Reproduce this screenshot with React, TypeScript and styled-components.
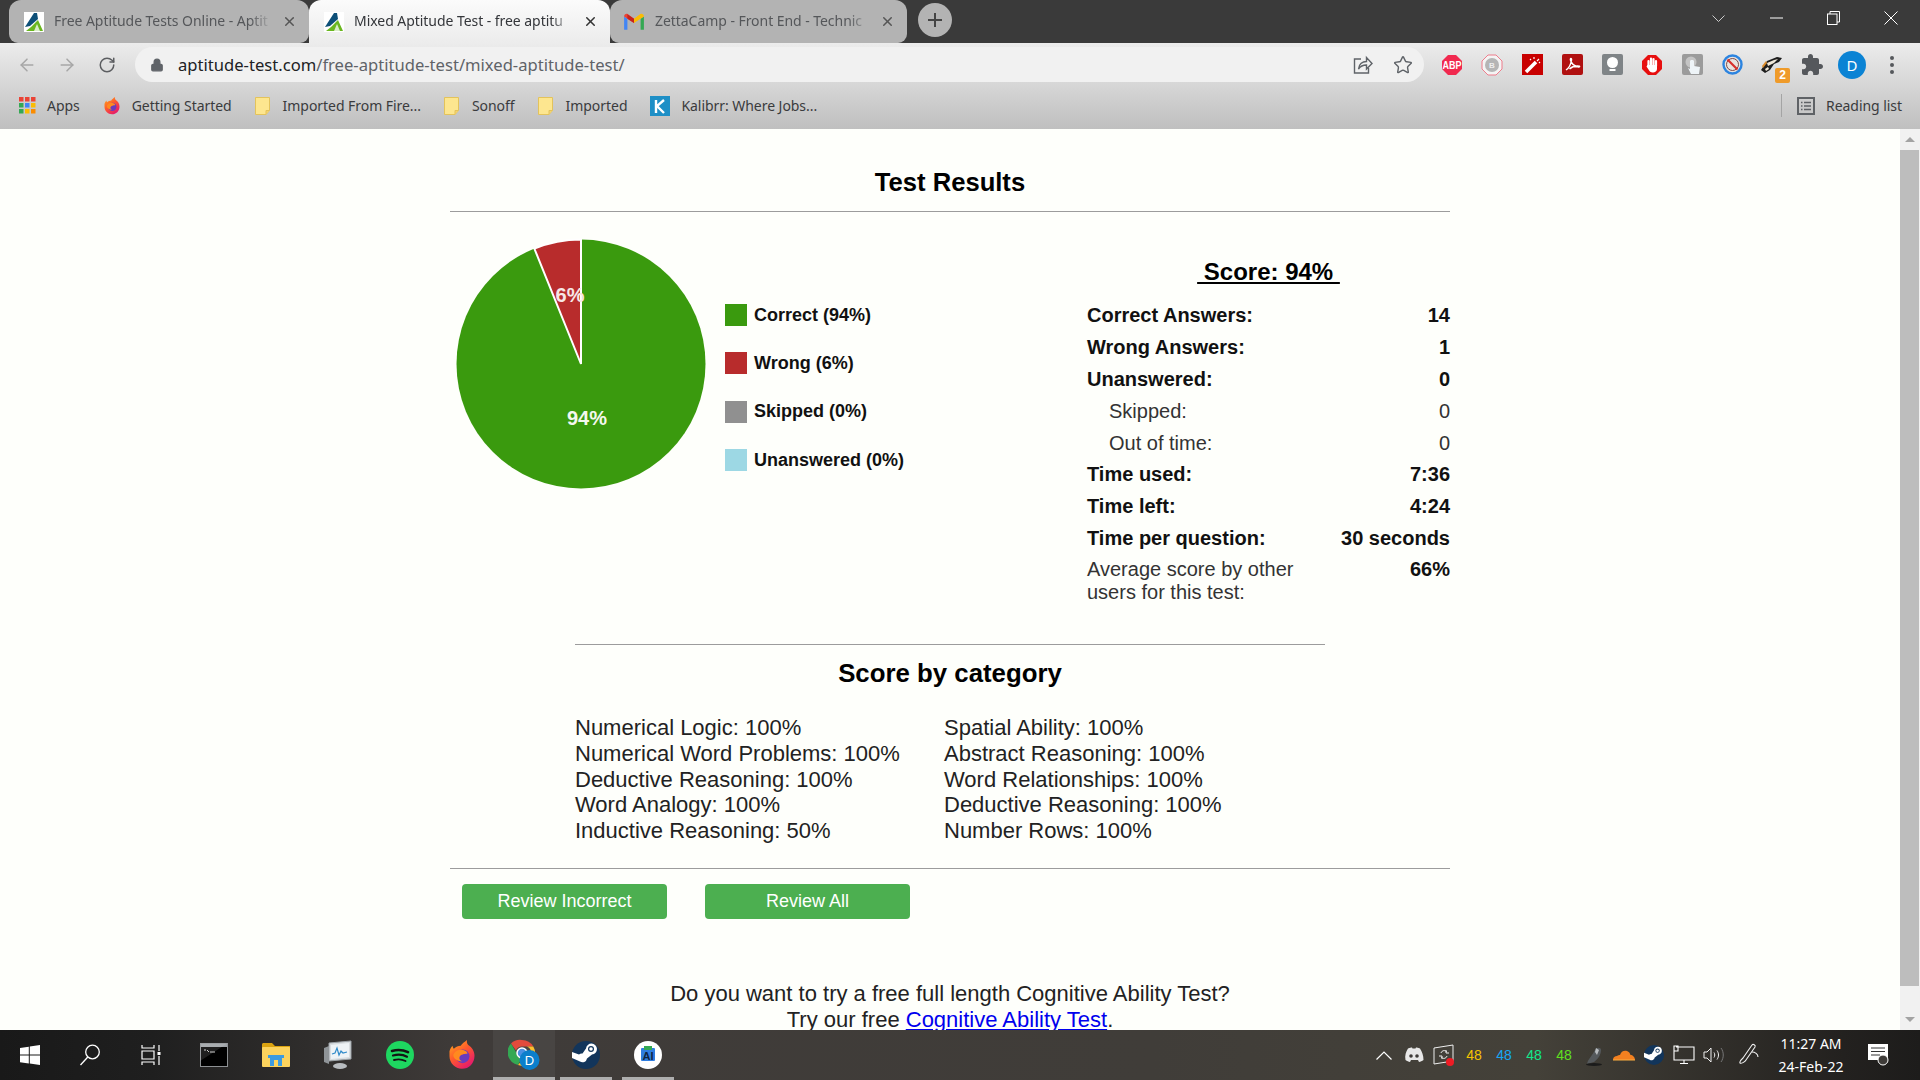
import { ReactNode } from 'react'
import styled, { createGlobalStyle } from 'styled-components'
import { ArrowLeft, ArrowRight, Lock, RotateCw, Star, X } from 'lucide-react'

const GlobalStyle = createGlobalStyle`
  html, body {
    margin: 0;
    height: 100%;
    overflow: hidden;
    background: #fefffb;
  }
  * {
    box-sizing: border-box;
  }
`

const UI_FONT = `"Noto Sans", "Open Sans", sans-serif`
const PAGE_FONT = `"Liberation Sans", Arial, sans-serif`

const Shell = styled.div`
  width: 1920px;
  height: 1080px;
  display: flex;
  flex-direction: column;
  font-family: ${UI_FONT};
`

/* ---------- tab strip ---------- */

const TabStrip = styled.div`
  height: 43px;
  flex: none;
  display: flex;
  align-items: stretch;
  padding-left: 9px;
  background: #3a3a3a;
`

const Tab = styled.div<{ $active?: boolean; $width: number; $pad: number }>`
  width: ${({ $width }) => $width}px;
  display: flex;
  align-items: center;
  gap: 10px;
  padding: 0 12px 0 ${({ $pad }) => $pad}px;
  border-radius: ${({ $active }) => ($active ? '12px 12px 0 0' : '12px 12px 9px 9px')};
  background: ${({ $active }) => ($active ? 'linear-gradient(#fbfbfb, #ececec)' : '#b3b3b3')};
  color: ${({ $active }) => ($active ? '#34363a' : '#55575a')};
`

const TabTitle = styled.span`
  flex: 1;
  min-width: 0;
  padding-bottom: 2px;
  white-space: nowrap;
  font-size: 14px;
  letter-spacing: -0.05px;
  -webkit-mask-image: linear-gradient(90deg, #000 90%, transparent);
  mask-image: linear-gradient(90deg, #000 90%, transparent);
`

const NewTab = styled.div`
  width: 34px;
  height: 34px;
  margin: 3px 0 0 11px;
  border-radius: 50%;
  display: flex;
  align-items: center;
  justify-content: center;
  background: #b3b3b3;
  color: #444;
`

const WindowControls = styled.div`
  margin-left: auto;
  display: flex;
  align-items: flex-start;
  color: #fff;
`

const WindowButton = styled.div<{ $width: number }>`
  width: ${({ $width }) => $width}px;
  height: 36px;
  display: flex;
  align-items: center;
  justify-content: center;
`

/* ---------- toolbar + bookmarks ---------- */

const ChromeBars = styled.div`
  flex: none;
  background: linear-gradient(#ececec, #bfbfbf);
`

const Toolbar = styled.div`
  height: 43px;
  display: flex;
  align-items: center;
  padding-left: 7px;
`

const NavButton = styled.div<{ $dim?: boolean }>`
  width: 40px;
  display: flex;
  justify-content: center;
  color: ${({ $dim }) => ($dim ? '#a6a6a6' : '#5c5e61')};
`

const AddressBar = styled.div`
  width: 1289px;
  height: 35px;
  margin-left: 8px;
  padding: 0 11px 0 15px;
  display: flex;
  align-items: center;
  border-radius: 18px;
  background: #f1f1f1;
  color: #5f6368;
`

const Url = styled.span`
  margin-left: 14px;
  font-size: 16.6px;
  color: #5f6368;
  white-space: nowrap;
`

const Domain = styled.span`
  color: #202124;
`

const AddressActions = styled.div`
  margin-left: auto;
  display: flex;
  align-items: center;
  gap: 20px;
`

const Extensions = styled.div`
  display: flex;
  align-items: center;
  margin-left: 8px;
`

const ExtensionSlot = styled.div`
  position: relative;
  width: 40px;
  height: 30px;
  display: flex;
  align-items: center;
  justify-content: center;
`

const Badge = styled.span`
  position: absolute;
  right: 2px;
  bottom: -3px;
  width: 15px;
  height: 15px;
  border-radius: 2px;
  background: #ef9b2a;
  color: #fff;
  font: bold 12px/15px ${PAGE_FONT};
  text-align: center;
`

const Avatar = styled.div`
  width: 28px;
  height: 28px;
  border-radius: 50%;
  background: #0b83d4;
  color: #fff;
  font-size: 15px;
  line-height: 28px;
  text-align: center;
`

const BookmarkBar = styled.div`
  height: 43px;
  display: flex;
  align-items: center;
  padding: 0 18px 4px 19px;
  gap: 23px;
  color: #3a3b3d;
  font-size: 14px;
  letter-spacing: -0.05px;
`

const Bookmark = styled.div`
  display: flex;
  align-items: center;
  gap: 11px;
  white-space: nowrap;
`

const FolderGlyph = styled.svg`
  margin-right: 2px;
`

const ReadingList = styled.div`
  margin-left: auto;
  height: 23px;
  padding-left: 15px;
  display: flex;
  align-items: center;
  gap: 11px;
  border-left: 1px solid #a4a4a4;
  white-space: nowrap;
`

/* ---------- page ---------- */

const Viewport = styled.div`
  flex: 1;
  min-height: 0;
  display: flex;
`

const Page = styled.main`
  flex: 1;
  min-width: 0;
  overflow: hidden;
  background: #fefffb;
  font-family: ${PAGE_FONT};
  color: #111;
`

const Container = styled.div`
  width: 1000px;
  margin: 0 auto;
  padding-top: 36px;
`

const Title = styled.h1`
  margin: 0;
  font-size: 25.6px;
  line-height: 34px;
  text-align: center;
  color: #000;
`

const Rule = styled.hr<{ $width?: number }>`
  width: ${({ $width }) => $width ?? 1000}px;
  height: 1px;
  margin: 0 auto;
  border: 0;
  background: #9c9c9c;
`

const TopRule = styled(Rule)`
  margin-top: 12px;
`

const Results = styled.section`
  display: flex;
  align-items: flex-start;
  height: 432px;
`

const PieChart = styled.svg`
  flex: none;
  margin-top: 22px;
`

const Legend = styled.ul`
  list-style: none;
  margin: 92px 0 0 13px;
  padding: 0;
  display: flex;
  flex-direction: column;
  gap: 26.4px;
`

const LegendItem = styled.li`
  display: flex;
  align-items: center;
  gap: 7px;
  height: 22px;
  font-size: 18px;
  font-weight: bold;
  color: #111;
  white-space: nowrap;
`

const Swatch = styled.span<{ $color: string }>`
  width: 22px;
  height: 22px;
  background: ${({ $color }) => $color};
`

const Stats = styled.div`
  width: 363px;
  margin-left: auto;
  padding-top: 46px;
`

const ScoreHeading = styled.div`
  margin-bottom: 14px;
  font-size: 24px;
  font-weight: bold;
  line-height: 28px;
  text-align: center;
  text-decoration: underline;
  white-space: pre;
  color: #000;
`

const StatRow = styled.div<{ $bold?: boolean; $indent?: boolean }>`
  height: 31.8px;
  display: flex;
  align-items: center;
  justify-content: space-between;
  padding-left: ${({ $indent }) => ($indent ? 22 : 0)}px;
  font-size: 20px;
  font-weight: ${({ $bold }) => ($bold ? 'bold' : 'normal')};
  color: ${({ $bold }) => ($bold ? '#111' : '#333')};
`

const AverageRow = styled.div`
  display: flex;
  align-items: flex-start;
  justify-content: space-between;
  padding-top: 4px;
  font-size: 20px;
  line-height: 23px;
  color: #333;
`

const AverageLabel = styled.span`
  width: 230px;
`

const AverageValue = styled.b`
  color: #111;
`

const CategoryHeading = styled.h2`
  margin: 13px 0 27px;
  font-size: 25.8px;
  line-height: 30px;
  text-align: center;
  color: #000;
`

const Categories = styled.div`
  display: grid;
  grid-template-columns: 369px 1fr;
  grid-auto-flow: column;
  grid-template-rows: repeat(5, 25.8px);
  margin-left: 125px;
  margin-bottom: 24px;
  font-size: 22px;
  line-height: 25.8px;
  color: #222;
`

const Actions = styled.div`
  display: flex;
  gap: 38px;
  margin: 15px 0 62px 12px;
`

const ReviewButton = styled.button`
  width: 205px;
  height: 35px;
  border: 0;
  border-radius: 4px;
  background: #4caf50;
  color: #fff;
  font-family: ${PAGE_FONT};
  font-size: 18px;
`

const Promo = styled.p`
  margin: 0;
  font-size: 22px;
  line-height: 26px;
  text-align: center;
  color: #222;
`

const Scrollbar = styled.div`
  width: 20px;
  flex: none;
  display: flex;
  flex-direction: column;
  align-items: center;
  background: #f1f1f1;
  padding-right: 1px;
`

const ScrollArrow = styled.div<{ $down?: boolean }>`
  height: 21px;
  width: 100%;
  display: flex;
  align-items: center;
  justify-content: center;
  &::before {
    content: '';
    border-left: 5px solid transparent;
    border-right: 5px solid transparent;
    ${({ $down }) =>
      $down ? 'border-top: 5px solid #a3a3a3;' : 'border-bottom: 5px solid #a3a3a3;'}
  }
`

const ScrollThumb = styled.div`
  width: 100%;
  flex: 1;
  margin-bottom: 23px;
  background: #bdbdbd;
`

/* ---------- taskbar ---------- */

const Taskbar = styled.footer`
  height: 50px;
  flex: none;
  display: flex;
  align-items: stretch;
  background: linear-gradient(90deg, #191919 0, #1f1f1f 8%, #3f3b39 24%, #403d39 60%, #444139 80%, #23211f 96%, #1d1c1b 100%);
  color: #fff;
`

const TaskButton = styled.div<{ $width?: number; $open?: boolean; $focus?: boolean }>`
  position: relative;
  width: ${({ $width }) => $width ?? 62}px;
  display: flex;
  align-items: center;
  justify-content: center;
  background: ${({ $focus }) => ($focus ? 'rgba(255,255,255,0.05)' : 'transparent')};
  &::after {
    content: '';
    display: ${({ $open }) => ($open ? 'block' : 'none')};
    position: absolute;
    left: ${({ $focus }) => ($focus ? 0 : 5)}px;
    right: ${({ $focus }) => ($focus ? 0 : 5)}px;
    bottom: 0;
    height: 3px;
    background: #aeaeae;
  }
`

const Tray = styled.div`
  margin-left: auto;
  padding-right: 15px;
  display: flex;
  align-items: stretch;
`

const TrayItem = styled.div<{ $width?: number }>`
  width: ${({ $width }) => $width ?? 30}px;
  display: flex;
  align-items: center;
  justify-content: center;
`

const TempReading = styled.span<{ $color: string }>`
  font: 14px ${PAGE_FONT};
  color: ${({ $color }) => $color};
`

const Clock = styled.div`
  width: 84px;
  display: flex;
  flex-direction: column;
  align-items: center;
  justify-content: center;
  font-size: 14px;
  line-height: 23px;
  color: #fff;
  white-space: nowrap;
`

/* ---------- drawings ---------- */

const AptitudeIcon = () => (
  <svg width="20" height="20" viewBox="0 0 20 20">
    <rect width="20" height="20" fill="#fff" />
    <path d="M1 15 10 1h3l1 6-8 7z" fill="#0d4f78" />
    <path d="M2 19l5-4 5-5 2-2 5 11z" fill="#6ab71f" />
    <path d="M10 19l3-7 3 7z" fill="#fff" opacity=".75" />
  </svg>
)

const GmailIcon = () => (
  <svg width="22" height="18" viewBox="0 0 20 16">
    <path d="M1 15V3l3 2v10z" fill="#4285f4" />
    <path d="M16 15V5l3-2v12z" fill="#34a853" />
    <path d="M1 3c0-2 2-3 3.500-2L10 5v4L1 3z" fill="#ea4335" />
    <path d="M19 3c0-2-2-3-3.500-2L10 5v4l9-6z" fill="#fbbc04" />
    <path d="M4 5l6 4V5L4 1z" fill="#c5221f" />
  </svg>
)

const FirefoxIcon = ({ size = 18 }: { size?: number }) => (
  <svg width={size} height={size} viewBox="0 0 24 24">
    <defs>
      <linearGradient id="fxOuter" x1="0" y1="0" x2=".7" y2="1">
        <stop offset="0" stopColor="#ffb21a" />
        <stop offset=".5" stopColor="#ff5a2c" />
        <stop offset="1" stopColor="#e3186f" />
      </linearGradient>
    </defs>
    <path d="M2 9c.5-2 1.500-3.500 2.500-4.500 0 1 .5 2 1 2.500C7 5.500 9 4.500 11 4.500c1-1.500 3-3 5-4.500-.3 1.500 0 3 1 4 3 2 5 5 5 8.500C22 18.500 17.500 23 12 23S2 18.500 2 13c0-1.500 0-2.800 0-4z" fill="url(#fxOuter)" />
    <circle cx="12.500" cy="13" r="5.500" fill="#6a3bbd" />
    <path d="M5 12c1-3 4-5 8-4 3 .7 4 3 3 3-2 0-5 .5-6 2.500-.5 1.500.5 3 2.500 3.500C9 17 5 15.500 5 12z" fill="#ff8a1f" />
  </svg>
)

const FolderBookmark = () => (
  <FolderGlyph width="15" height="18" viewBox="0 0 15 18">
    <path d="M.5.5h14v13l-3.500 4H.5z" fill="#fde68f" stroke="#e3c35c" />
    <path d="M14.500 13.500H11v4" fill="#f4d36f" stroke="#e3c35c" />
  </FolderGlyph>
)

const AppsGrid = () => {
  const colors = ['#ea4335', '#ea4335', '#ea4335', '#34a853', '#4285f4', '#fbbc04', '#34a853', '#fbbc04', '#fb8c00']
  return (
    <svg width="17" height="17" viewBox="0 0 17 17">
      {colors.map((color, i) => (
        <rect key={i} x={(i % 3) * 6} y={Math.floor(i / 3) * 6} width="4.500" height="4.500" fill={color} />
      ))}
    </svg>
  )
}

const KalibrrIcon = () => (
  <svg width="20" height="20" viewBox="0 0 20 20">
    <rect width="20" height="20" fill="#1e8fc6" />
    <path d="M6 4v13M14 4 7 10l7 7" fill="none" stroke="#fff" strokeWidth="2.400" />
  </svg>
)

const ShareIcon = () => (
  <svg width="20" height="20" viewBox="0 0 20 20" fill="none" stroke="#5f6368" strokeWidth="1.400">
    <path d="M8 4H1.500v14h14v-5" />
    <path d="M5.500 14c.5-5 4-7.500 8-7.500V2.500l5.500 6-5.500 5.500v-4c-3.500 0-6 1-8 4z" />
  </svg>
)

const Octagon = ({ fill, stroke }: { fill: string; stroke?: string }) => (
  <path d="M7 1h8l6 6v8l-6 6H7l-6-6V7z" fill={fill} stroke={stroke} />
)

const AbpIcon = () => (
  <svg width="22" height="22" viewBox="0 0 22 22">
    <Octagon fill="#f1294f" />
    <text x="11" y="15" textAnchor="middle" fontFamily={PAGE_FONT} fontWeight="bold" fontSize="10.500" textLength="19" lengthAdjust="spacingAndGlyphs" fill="#fff">ABP</text>
  </svg>
)

const BadgeBlockerIcon = () => (
  <svg width="22" height="22" viewBox="0 0 22 22">
    <Octagon fill="#f4f4f4" stroke="#ee7d8c" />
    <circle cx="11" cy="11" r="7" fill="#b5b5b5" />
    <text x="11" y="14" textAnchor="middle" fontFamily={PAGE_FONT} fontWeight="bold" fontSize="8" fill="#eee">B</text>
  </svg>
)

const WandIcon = () => (
  <svg width="21" height="21" viewBox="0 0 21 21">
    <rect width="21" height="21" fill="#c80000" />
    <path d="M4 18 14 8" stroke="#fff" strokeWidth="3.500" />
    <path d="M15 7l2-2M12 3v2M18 9l-1-1M8 5l1 1" stroke="#fff" strokeWidth="1.200" />
  </svg>
)

const PdfIcon = () => (
  <svg width="21" height="21" viewBox="0 0 21 21">
    <rect width="21" height="21" rx="2" fill="#b01010" />
    <path d="M4 16c3-2 5-6 5.500-10 .2-2-1.500-2-1 0 .7 3 3 6 8 7 1.500.2 1.500-1 0-1-3-.2-7 1-9 3" fill="none" stroke="#fff" strokeWidth="1.500" />
  </svg>
)

const BulbIcon = () => (
  <svg width="21" height="21" viewBox="0 0 21 21">
    <rect width="21" height="21" rx="2" fill="#7f8487" />
    <circle cx="10.500" cy="8.500" r="5.500" fill="#fff" />
    <rect x="7.500" y="15" width="6" height="2" fill="#fff" />
  </svg>
)

const StopHandIcon = () => (
  <svg width="22" height="22" viewBox="0 0 22 22">
    <Octagon fill="#e70f0f" />
    <path d="M7.500 12V7M10 11V4.500M12.500 11V5M15 12V7" stroke="#fff" strokeWidth="2.200" strokeLinecap="round" />
    <path d="M6.500 11h9.500v4c0 2-2 3.500-4 3.500-2.500 0-3.500-1-4.500-3l-2-3z" fill="#fff" />
  </svg>
)

const TouchIcon = () => (
  <svg width="21" height="21" viewBox="0 0 21 21">
    <rect width="21" height="21" rx="2" fill="#9b9b9b" />
    <circle cx="9" cy="8" r="5.500" fill="#c4c4c4" />
    <path d="M8 7v8l-2-1 3 6h8l1-7-6-1V7c0-1.500-4-1.500-4 0z" fill="#eef4f8" />
  </svg>
)

const NoEntryIcon = () => (
  <svg width="21" height="21" viewBox="0 0 21 21">
    <circle cx="10.500" cy="10.500" r="9" fill="#e9e4e0" stroke="#2c84e0" strokeWidth="2.400" />
    <circle cx="10.500" cy="10.500" r="6" fill="none" stroke="#7a4a4a" strokeWidth="1" />
    <path d="M5.500 5.500l10 10" stroke="#d8302c" strokeWidth="2.200" />
  </svg>
)

const BadgerIcon = () => (
  <svg width="24" height="20" viewBox="0 0 24 20">
    <path d="M1 15 7 6l10-4 5 1-3 4-5 2-4 6-5 3z" fill="#1d1d1d" />
    <path d="M7 8l7-3 4-1-4 4-6 3zM5 14l3-2 1 2-3 2z" fill="#efe7d8" />
    <path d="M2 11l4-5 1 2-4 5z" fill="#d98a2a" />
  </svg>
)

const PuzzleIcon = () => (
  <svg width="24" height="24" viewBox="0 0 24 24" fill="#55585c">
    <path d="M20.500 11H19V7c0-1.100-.9-2-2-2h-4V3.500C13 2.120 11.880 1 10.500 1S8 2.120 8 3.500V5H4c-1.100 0-1.990.9-1.990 2v3.800H3.500c1.490 0 2.700 1.210 2.700 2.700s-1.210 2.700-2.700 2.700H2V20c0 1.100.9 2 2 2h3.800v-1.500c0-1.490 1.210-2.700 2.700-2.700 1.490 0 2.700 1.210 2.700 2.700V22H17c1.100 0 2-.9 2-2v-4h1.500c1.380 0 2.500-1.120 2.500-2.500S21.880 11 20.500 11z" />
  </svg>
)

const MoreDots = () => (
  <svg width="6" height="20" viewBox="0 0 6 20" fill="#55585c">
    <circle cx="3" cy="3" r="2" />
    <circle cx="3" cy="10" r="2" />
    <circle cx="3" cy="17" r="2" />
  </svg>
)

const ReadingIcon = () => (
  <svg width="18" height="18" viewBox="0 0 18 18" fill="none" stroke="#5f6266">
    <rect x="1" y="1" width="16" height="16" strokeWidth="2" />
    <path d="M4 5.500h1.500M7 5.500h7M4 9h1.500M7 9h7M4 12.500h1.500M7 12.500h7" strokeWidth="1.300" />
  </svg>
)

const WindowsLogo = () => (
  <svg width="20" height="20" viewBox="0 0 20 20" fill="#fff">
    <path d="M0 3l8.800-1.300v7.900H0zM9.800 1.500 20 0v9.600H9.800zM0 10.600h8.800v7.800L0 17.200zM9.800 10.600H20V20L9.800 18.600z" />
  </svg>
)

const SearchGlyph = () => (
  <svg width="22" height="22" viewBox="0 0 22 22" fill="none" stroke="#fff" strokeWidth="1.300">
    <circle cx="13.500" cy="8" r="6.800" />
    <path d="M8.800 13 1.500 21" />
  </svg>
)

const TaskViewGlyph = () => (
  <svg width="20" height="20" viewBox="0 0 20 20" fill="none" stroke="#fff" strokeWidth="1.200">
    <path d="M1 0v3h12V0M1 20v-3h12v3M1 6h12v8H1zM18 0v6M18 11v9" />
    <rect x="16.500" y="7" width="3" height="3" fill="#fff" stroke="none" />
  </svg>
)

const ConsoleIcon = () => (
  <svg width="28" height="24" viewBox="0 0 28 24">
    <rect x=".5" y=".5" width="27" height="23" fill="#000" stroke="#8d9093" />
    <rect x="1" y="1" width="26" height="3" fill="#9ea2a6" />
    <path d="M0 0h28L0 18z" fill="#fff" opacity=".12" />
    <path d="M4 7h2M7 7l2 2M10 9h5" stroke="#ccc" strokeWidth="1" />
  </svg>
)

const ExplorerIcon = () => (
  <svg width="28" height="24" viewBox="0 0 28 24">
    <path d="M0 1.500C0 .7.700 0 1.500 0H10l3 3h15v4H0z" fill="#dba310" />
    <rect y="4" width="28" height="20" rx="1" fill="#fcd35d" />
    <path d="M8 23V13h12v10h-4v-6h-4v6z" fill="#3c9be0" />
    <rect x="6" y="12" width="16" height="3" fill="#3c9be0" />
  </svg>
)

const MonitorIcon = () => (
  <svg width="28" height="30" viewBox="0 0 28 30">
    <path d="M5 3 27 1v18L5 21z" fill="#d8dde0" stroke="#9aa0a5" />
    <path d="M7 5 25 3v14L7 19z" fill="#eef3f6" />
    <path d="M8 14l3-1 2-5 2 7 2-4 2 2 4-1" fill="none" stroke="#2f8ac9" strokeWidth="1.200" />
    <path d="M0 8l5-2v18l-5-2z" fill="#8f9498" />
    <ellipse cx="16" cy="26" rx="7" ry="3" fill="#b8bcc0" />
  </svg>
)

const SpotifyIcon = () => (
  <svg width="28" height="28" viewBox="0 0 28 28" fill="none" stroke="#141414" strokeLinecap="round">
    <circle cx="14" cy="14" r="14" fill="#1ed760" stroke="none" />
    <path d="M6 10c5-1.500 11-1.200 16 1.200" strokeWidth="2.600" />
    <path d="M7 14.500c4.500-1.200 10-1 14 1.200" strokeWidth="2.200" />
    <path d="M8 19c4-1 8-.8 11.500 1" strokeWidth="1.900" />
  </svg>
)

const ChromeProfileIcon = () => (
  <svg width="32" height="32" viewBox="0 0 32 32">
    <path d="M14 1a13 13 0 0 1 11.300 6.500H14a6.500 6.500 0 0 0-6 4L3 4.500A13 13 0 0 1 14 1z" fill="#e24b3c" />
    <path d="M3 4.500l5.500 9.500a6 6 0 0 0 5 5.500l-3.500 6.500A13 13 0 0 1 3 4.500z" fill="#34a853" />
    <path d="M25.300 7.500A13 13 0 0 1 14 27l-4 -1 6-7a6 6 0 0 0 3-11.500z" fill="#fbc02d" />
    <circle cx="14" cy="14" r="5" fill="#4a90e2" stroke="#fff" strokeWidth="1.500" />
    <circle cx="21.500" cy="21" r="10" fill="#0b7fcb" />
    <text x="21.500" y="26" textAnchor="middle" fontFamily={PAGE_FONT} fontSize="13" fill="#fff">D</text>
  </svg>
)

const SteamIcon = ({ size = 28 }: { size?: number }) => (
  <svg width={size} height={size} viewBox="0 0 28 28">
    <circle cx="14" cy="14" r="14" fill="#12355b" />
    <path d="M0 17l8 3.500a4.500 4.500 0 0 0 7-3l5-4a5.500 5.500 0 1 0-6-6l-3.500 5a4.500 4.500 0 0 0-3.500 1L0 11z" fill="#fff" />
    <circle cx="19" cy="8" r="3" fill="#12355b" />
    <circle cx="19" cy="8" r="1.800" fill="#fff" />
  </svg>
)

const StudioIcon = () => (
  <svg width="28" height="28" viewBox="0 0 28 28">
    <circle cx="14" cy="14" r="14" fill="#fff" />
    <rect x="7" y="7" width="14" height="13" rx="1" fill="#2f7de0" />
    <rect x="10" y="5" width="8" height="4" fill="#34a853" />
    <text x="14" y="19" textAnchor="middle" fontFamily={PAGE_FONT} fontWeight="bold" fontSize="11" fill="#10243f">AI</text>
  </svg>
)

const DiscordIcon = () => (
  <svg width="20" height="16" viewBox="0 0 20 16" fill="#e8e8e8">
    <path d="M4 1.500C6 .7 7 .5 8 .5l.5 1h3l.5-1c1 0 2 .2 4 1 2 3 3.500 7 3.500 11.500-1.500 1.200-3 1.800-4.500 2l-1-2H7l-1 2c-1.500-.2-3-.8-4.500-2C.5 8.500 2 4.500 4 1.500z" />
    <circle cx="7" cy="9" r="1.800" fill="#3f3c39" />
    <circle cx="13" cy="9" r="1.800" fill="#3f3c39" />
  </svg>
)

const SyncIcon = () => (
  <svg width="22" height="22" viewBox="0 0 22 22" fill="none" stroke="#eee" strokeWidth="1">
    <path d="M1 4 20 1v16L1 20z" />
    <path d="M14 8c-1.500-2-5-2-6 1M8 13c1.500 2 5 2 6-1M13 6v3h3M9 15v-3H6" />
    <circle cx="17" cy="18" r="4" fill="#ee1c25" stroke="none" />
  </svg>
)

const MouseIcon = () => (
  <svg width="18" height="22" viewBox="0 0 18 22">
    <path d="M2 20c1-5 5-8 8-14 1-3 6-3 6 0 0 5-3 9-7 12z" fill="#55595c" />
    <path d="M11 4l3 2-2 5-2-3z" fill="#b8bcbf" />
    <ellipse cx="9" cy="20.500" rx="8" ry="1.500" fill="#1b1b1b" />
  </svg>
)

const CloudflareIcon = () => (
  <svg width="22" height="12" viewBox="0 0 22 12">
    <path d="M0 11c0-3 2-4 4-4 1-1 2-1 3-1 1-3.500 4-5 7-4 2 .7 3 2 3.500 4 2 0 4.500 2 4.500 5z" fill="#f38020" />
    <path d="M0 11h22" stroke="#fbad41" />
  </svg>
)

const NetworkIcon = () => (
  <svg width="22" height="20" viewBox="0 0 22 20" fill="none" stroke="#fff" strokeWidth="1.100">
    <path d="M3 2h18v13H1V1h4v5H1M11 15v3M7 18.500h8" />
  </svg>
)

const VolumeIcon = () => (
  <svg width="22" height="18" viewBox="0 0 22 18" fill="none" stroke="#f0f0f0" strokeWidth="1">
    <path d="M1 6h3l4-4v14l-4-4H1z" />
    <path d="M11 6.500c1 1.500 1 3.500 0 5M14 4.500c2 3 2 6 0 9" />
    <path d="M18 2c3 4 3 10 0 14" stroke="#777" />
  </svg>
)

const PenIcon = () => (
  <svg width="22" height="24" viewBox="0 0 22 24" fill="none" stroke="#f0f0f0" strokeWidth="1.100">
    <path d="M5 15 14 2c1-1.500 4 0 3 2L8 17c-1 2-5 4-6 3s1-3 3-5z" />
    <path d="M14 9c3 0 6 2 6 5" />
  </svg>
)

const NotificationIcon = () => (
  <svg width="22" height="22" viewBox="0 0 22 22">
    <path d="M0 0h20v16H0z" fill="#fff" />
    <path d="M3 4h14M3 7.500h14M3 11h9" stroke="#333" strokeWidth="1.200" />
    <circle cx="15" cy="16" r="5" fill="#3f3c39" stroke="#fff" />
  </svg>
)

/* pie slices: green 94%, red 6% from 12 o'clock */
const PIE_CX = 131
const PIE_CY = 130
const PIE_R = 124.5
const wrongAngle = (2 * Math.PI * 22) / 360
const wedgeX = PIE_CX - PIE_R * Math.sin(wrongAngle)
const wedgeY = PIE_CY - PIE_R * Math.cos(wrongAngle)

const LEGEND = [
  { color: '#3a9a0e', label: 'Correct (94%)' },
  { color: '#b82c2c', label: 'Wrong (6%)' },
  { color: '#909090', label: 'Skipped (0%)' },
  { color: '#9dd8e4', label: 'Unanswered (0%)' },
]

const STATS: { label: string; value: string; bold?: boolean; indent?: boolean }[] = [
  { label: 'Correct Answers:', value: '14', bold: true },
  { label: 'Wrong Answers:', value: '1', bold: true },
  { label: 'Unanswered:', value: '0', bold: true },
  { label: 'Skipped:', value: '0', indent: true },
  { label: 'Out of time:', value: '0', indent: true },
  { label: 'Time used:', value: '7:36', bold: true },
  { label: 'Time left:', value: '4:24', bold: true },
  { label: 'Time per question:', value: '30 seconds', bold: true },
]

const CATEGORIES = [
  'Numerical Logic: 100%',
  'Numerical Word Problems: 100%',
  'Deductive Reasoning: 100%',
  'Word Analogy: 100%',
  'Inductive Reasoning: 50%',
  'Spatial Ability: 100%',
  'Abstract Reasoning: 100%',
  'Word Relationships: 100%',
  'Deductive Reasoning: 100%',
  'Number Rows: 100%',
]

const TABS: { title: string; icon: ReactNode; width: number; pad: number; active?: boolean }[] = [
  { title: 'Free Aptitude Tests Online - Aptit', icon: <AptitudeIcon />, width: 300, pad: 15 },
  { title: 'Mixed Aptitude Test - free aptitu', icon: <AptitudeIcon />, width: 301, pad: 15, active: true },
  { title: 'ZettaCamp - Front End - Technic', icon: <GmailIcon />, width: 297, pad: 13 },
]

const EXTENSIONS: ReactNode[] = [
  <AbpIcon />,
  <BadgeBlockerIcon />,
  <WandIcon />,
  <PdfIcon />,
  <BulbIcon />,
  <StopHandIcon />,
  <TouchIcon />,
  <NoEntryIcon />,
]

export default function App() {
  return (
    <Shell>
      <GlobalStyle />
      <TabStrip>
        {TABS.map((tab) => (
          <Tab key={tab.title} $active={tab.active} $width={tab.width} $pad={tab.pad}>
            {tab.icon}
            <TabTitle>{tab.title}</TabTitle>
            <X size={15} strokeWidth={2.4} color={tab.active ? '#333' : '#555'} />
          </Tab>
        ))}
        <NewTab>
          <svg width="16" height="16" viewBox="0 0 16 16" stroke="currentColor" strokeWidth="2">
            <path d="M8 1v14M1 8h14" />
          </svg>
        </NewTab>
        <WindowControls>
          <WindowButton $width={60}>
            <svg width="13" height="7" viewBox="0 0 13 7" fill="none" stroke="#ccc">
              <path d="M.5.500l6 6 6-6" />
            </svg>
          </WindowButton>
          <WindowButton $width={56}>
            <svg width="13" height="2" viewBox="0 0 13 2" stroke="#fff">
              <path d="M0 1h13" />
            </svg>
          </WindowButton>
          <WindowButton $width={58}>
            <svg width="13" height="14" viewBox="0 0 13 14" fill="none" stroke="#fff">
              <rect x=".5" y="3" width="9.500" height="10.500" />
              <path d="M3 3V.500h9.500V11H10" />
            </svg>
          </WindowButton>
          <WindowButton $width={58}>
            <svg width="14" height="14" viewBox="0 0 14 14" stroke="#fff">
              <path d="M.5.500l13 13M13.500.500l-13 13" />
            </svg>
          </WindowButton>
        </WindowControls>
      </TabStrip>

      <ChromeBars>
        <Toolbar>
          <NavButton $dim>
            <ArrowLeft size={20} strokeWidth={1.8} />
          </NavButton>
          <NavButton $dim>
            <ArrowRight size={20} strokeWidth={1.8} />
          </NavButton>
          <NavButton>
            <RotateCw size={18} strokeWidth={2} />
          </NavButton>
          <AddressBar>
            <Lock size={14} fill="currentColor" strokeWidth={2} />
            <Url>
              <Domain>aptitude-test.com</Domain>/free-aptitude-test/mixed-aptitude-test/
            </Url>
            <AddressActions>
              <ShareIcon />
              <Star size={20} strokeWidth={1.7} color="#5f6368" />
            </AddressActions>
          </AddressBar>
          <Extensions>
            {EXTENSIONS.map((icon, i) => (
              <ExtensionSlot key={i}>{icon}</ExtensionSlot>
            ))}
            <ExtensionSlot>
              <BadgerIcon />
              <Badge>2</Badge>
            </ExtensionSlot>
            <ExtensionSlot>
              <PuzzleIcon />
            </ExtensionSlot>
            <ExtensionSlot>
              <Avatar>D</Avatar>
            </ExtensionSlot>
            <ExtensionSlot>
              <MoreDots />
            </ExtensionSlot>
          </Extensions>
        </Toolbar>
        <BookmarkBar>
          <Bookmark>
            <AppsGrid />
            Apps
          </Bookmark>
          <Bookmark>
            <FirefoxIcon />
            Getting Started
          </Bookmark>
          <Bookmark>
            <FolderBookmark />
            Imported From Fire...
          </Bookmark>
          <Bookmark>
            <FolderBookmark />
            Sonoff
          </Bookmark>
          <Bookmark>
            <FolderBookmark />
            Imported
          </Bookmark>
          <Bookmark>
            <KalibrrIcon />
            Kalibrr: Where Jobs...
          </Bookmark>
          <ReadingList>
            <ReadingIcon />
            Reading list
          </ReadingList>
        </BookmarkBar>
      </ChromeBars>

      <Viewport>
        <Page>
          <Container>
            <Title>Test Results</Title>
            <TopRule />
            <Results>
              <PieChart width="262" height="262" viewBox="0 0 262 262">
                <circle cx={PIE_CX} cy={PIE_CY} r={PIE_R} fill="#3a9a0e" />
                <path
                  d={`M${PIE_CX} ${PIE_CY}L${wedgeX} ${wedgeY}A${PIE_R} ${PIE_R} 0 0 1 ${PIE_CX} ${PIE_CY - PIE_R}Z`}
                  fill="#b82c2c"
                  stroke="#fff"
                  strokeWidth="2"
                />
                <text x="137" y="191" textAnchor="middle" fontSize="20" fontWeight="bold" fill="#f4f8ee" fontFamily={PAGE_FONT}>
                  94%
                </text>
                <text x="120" y="68" textAnchor="middle" fontSize="20" fontWeight="bold" fill="#f6e6e6" fontFamily={PAGE_FONT}>
                  6%
                </text>
              </PieChart>
              <Legend>
                {LEGEND.map((item) => (
                  <LegendItem key={item.label}>
                    <Swatch $color={item.color} />
                    {item.label}
                  </LegendItem>
                ))}
              </Legend>
              <Stats>
                <ScoreHeading> Score: 94% </ScoreHeading>
                {STATS.map((stat) => (
                  <StatRow key={stat.label} $bold={stat.bold} $indent={stat.indent}>
                    <span>{stat.label}</span>
                    <span>{stat.value}</span>
                  </StatRow>
                ))}
                <AverageRow>
                  <AverageLabel>Average score by other users for this test:</AverageLabel>
                  <AverageValue>66%</AverageValue>
                </AverageRow>
              </Stats>
            </Results>
            <Rule $width={750} />
            <CategoryHeading>Score by category</CategoryHeading>
            <Categories>
              {CATEGORIES.map((category, i) => (
                <div key={i}>{category}</div>
              ))}
            </Categories>
            <Rule />
            <Actions>
              <ReviewButton>Review Incorrect</ReviewButton>
              <ReviewButton>Review All</ReviewButton>
            </Actions>
            <Promo>
              Do you want to try a free full length Cognitive Ability Test?
              <br />
              Try our free <a href="#cognitive">Cognitive Ability Test</a>.
            </Promo>
          </Container>
        </Page>
        <Scrollbar>
          <ScrollArrow />
          <ScrollThumb />
          <ScrollArrow $down />
        </Scrollbar>
      </Viewport>

      <Taskbar>
        <TaskButton $width={60}>
          <WindowsLogo />
        </TaskButton>
        <TaskButton $width={60}>
          <SearchGlyph />
        </TaskButton>
        <TaskButton $width={62}>
          <TaskViewGlyph />
        </TaskButton>
        <TaskButton $width={63}>
          <ConsoleIcon />
        </TaskButton>
        <TaskButton>
          <ExplorerIcon />
        </TaskButton>
        <TaskButton>
          <MonitorIcon />
        </TaskButton>
        <TaskButton>
          <SpotifyIcon />
        </TaskButton>
        <TaskButton>
          <FirefoxIcon size={30} />
        </TaskButton>
        <TaskButton $open $focus>
          <ChromeProfileIcon />
        </TaskButton>
        <TaskButton $open>
          <SteamIcon />
        </TaskButton>
        <TaskButton $open>
          <StudioIcon />
        </TaskButton>
        <Tray>
          <TrayItem>
            <svg width="16" height="9" viewBox="0 0 16 9" fill="none" stroke="#fff" strokeWidth="1.200">
              <path d="M.5 8.500 8 1l7.500 7.500" />
            </svg>
          </TrayItem>
          <TrayItem>
            <DiscordIcon />
          </TrayItem>
          <TrayItem>
            <SyncIcon />
          </TrayItem>
          <TrayItem>
            <TempReading $color="#f5c400">48</TempReading>
          </TrayItem>
          <TrayItem>
            <TempReading $color="#16a6f5">48</TempReading>
          </TrayItem>
          <TrayItem>
            <TempReading $color="#12e88c">48</TempReading>
          </TrayItem>
          <TrayItem>
            <TempReading $color="#5fe01e">48</TempReading>
          </TrayItem>
          <TrayItem>
            <MouseIcon />
          </TrayItem>
          <TrayItem>
            <CloudflareIcon />
          </TrayItem>
          <TrayItem>
            <SteamIcon size={20} />
          </TrayItem>
          <TrayItem>
            <NetworkIcon />
          </TrayItem>
          <TrayItem>
            <VolumeIcon />
          </TrayItem>
          <TrayItem $width={40}>
            <PenIcon />
          </TrayItem>
          <Clock>
            <span>11:27 AM</span>
            <span>24-Feb-22</span>
          </Clock>
          <TrayItem $width={52}>
            <NotificationIcon />
          </TrayItem>
        </Tray>
      </Taskbar>
    </Shell>
  )
}
